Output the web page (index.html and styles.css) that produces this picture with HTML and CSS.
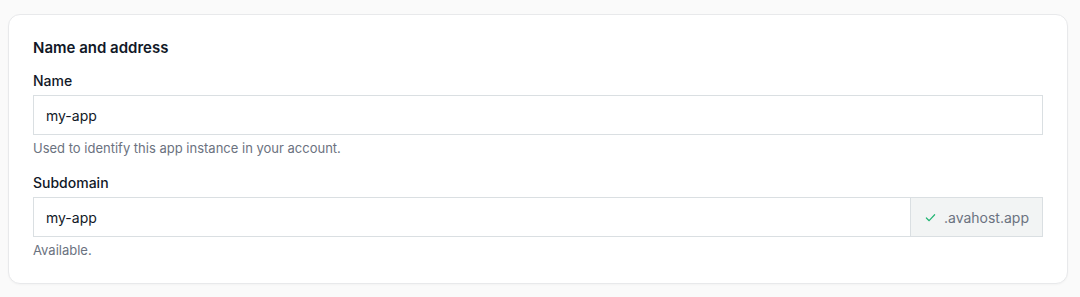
FILE: index.html
```html
<!DOCTYPE html>
<html lang="en">
<head>
  <meta charset="UTF-8" />
  <title>Name and address</title>
  <link rel="stylesheet" href="styles.css">
</head>
<body>
  <section class="card">
    <h2>Name and address</h2>

    <div class="field">
      <label for="name">Name</label>
      <input type="text" id="name" value="my-app" />
      <p class="hint">Used to identify this app instance in your account.</p>
    </div>

    <div class="field">
      <label for="subdomain">Subdomain</label>
      <div class="input-group">
        <input type="text" id="subdomain" value="my-app" />
        <span class="addon">
          <svg width="11" height="11" viewBox="0 0 12 12" fill="none" stroke="#22b573" stroke-width="1.3" stroke-linecap="round" stroke-linejoin="round"><path d="M1.5 6.5l3 3 6-6.5"/></svg>
          .avahost.app
        </span>
      </div>
      <p class="hint">Available.</p>
    </div>
  </section>
</body>
</html>
```

FILE: styles.css
```css
body {
  font-family: Inter, "Noto Sans", sans-serif;
  background-color: #fafafa;
  margin: 0;
  padding: 14px 12px 14px 8px;
  color: #111827;
}
.card {
  background-color: white;
  border: 1px solid #e8e9eb;
  border-radius: 12px;
  padding: 23px 24px 24px 24px;
  box-shadow: 0 1px 2px rgba(0, 0, 0, 0.03);
}
h2 {
  margin: 0;
  font-size: 15px;
  line-height: 20px;
  font-weight: 600;
}
.field {
  margin-top: 13px;
}
.field + .field {
  margin-top: 16px;
}
label {
  display: block;
  font-size: 14px;
  line-height: 20px;
  font-weight: 500;
  margin-bottom: 4px;
}
input {
  display: block;
  box-sizing: border-box;
  width: 100%;
  height: 40px;
  padding: 0 12px;
  font-family: inherit;
  font-size: 14px;
  color: #111827;
  border: 1px solid #dadfe2;
  border-radius: 0;
  background-color: white;
  outline: none;
}
.input-group {
  display: flex;
}
.input-group input {
  flex: 1;
}
.addon {
  display: flex;
  align-items: center;
  gap: 8px;
  box-sizing: border-box;
  height: 40px;
  padding: 0 13px 0 14px;
  background-color: #f2f4f4;
  border: 1px solid #dadfe2;
  border-left: none;
  font-size: 14px;
  color: #6b7280;
}
.hint {
  margin: 4px 0 0;
  font-size: 13px;
  line-height: 18px;
  color: #6b7280;
}
```
